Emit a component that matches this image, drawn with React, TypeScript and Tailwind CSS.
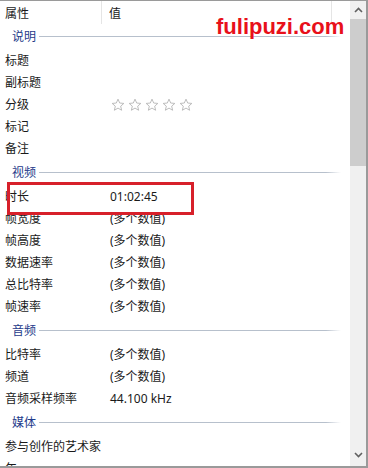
import React from 'react';

type Row = { name: string; value?: React.ReactNode };
type Group = { title: string; rows: Row[] };

const Stars = () => (
  <div className="flex items-center gap-[3px] pl-[1px]">
    {[0, 1, 2, 3, 4].map((i) => (
      <svg key={i} width="14" height="14" viewBox="0 0 24 24">
        <polygon
          points="12,2 14.9,8.6 22,9.3 16.6,14 18.2,21 12,17.3 5.8,21 7.4,14 2,9.3 9.1,8.6"
          fill="none"
          stroke="#b3b3b3"
          strokeWidth="1.5"
          strokeLinejoin="round"
        />
      </svg>
    ))}
  </div>
);

const groups: Group[] = [
  {
    title: '说明',
    rows: [
      { name: '标题' },
      { name: '副标题' },
      { name: '分级', value: <Stars /> },
      { name: '标记' },
      { name: '备注' },
    ],
  },
  {
    title: '视频',
    rows: [
      { name: '时长', value: '01:02:45' },
      { name: '帧宽度', value: '(多个数值)' },
      { name: '帧高度', value: '(多个数值)' },
      { name: '数据速率', value: '(多个数值)' },
      { name: '总比特率', value: '(多个数值)' },
      { name: '帧速率', value: '(多个数值)' },
    ],
  },
  {
    title: '音频',
    rows: [
      { name: '比特率', value: '(多个数值)' },
      { name: '频道', value: '(多个数值)' },
      { name: '音频采样频率', value: '44.100 kHz' },
    ],
  },
  {
    title: '媒体',
    rows: [{ name: '参与创作的艺术家' }, { name: '年' }],
  },
];

export default function App() {
  return (
    <div
      className="relative w-[368px] h-[468px] overflow-hidden bg-white flex border-t border-b-2 border-r-2 border-[#9a9a9a] text-[12px] text-[#1a1a1a]"
      style={{ fontFamily: '"Noto Sans", "Noto Sans CJK SC", sans-serif' }}
    >
      <div className="flex-1 overflow-hidden">
        {/* column header */}
        <div className="flex h-[23px] items-center">
          <div className="w-[102px] h-full flex items-center pl-[5px] pt-[3px] border-r border-[#e5e5e5]">属性</div>
          <div className="w-[230px] h-full flex items-center pl-[7px] pt-[3px] border-r border-[#e5e5e5]">值</div>
        </div>

        {groups.map((g, gi) => (
          <div key={g.title} className={gi === 0 ? '' : 'mt-[2px]'}>
            <div className="flex h-[24px] items-center pl-[12px] pr-[9px]">
              <span className="text-[#1e3a8a] pt-[2px]">{g.title}</span>
              <div className="flex-1 h-px ml-[3px] mt-[1px] bg-[linear-gradient(to_right,#b7c0cc_95%,transparent)]" />
            </div>
            {g.rows.map((r) => (
              <div key={r.name} className="flex h-[22px] items-center pt-[4px]">
                <div className="w-[110px] pl-[5px] whitespace-nowrap">{r.name}</div>
                <div className="flex-1 whitespace-nowrap">{r.value}</div>
              </div>
            ))}
          </div>
        ))}
      </div>

      {/* scrollbar */}
      <div className="w-[16px] h-full bg-[#f0f0f0] flex flex-col">
        <div className="h-[17px] flex items-center justify-center">
          <svg width="9" height="6" viewBox="0 0 9 6">
            <path d="M1 5 L4.5 1.5 L8 5" fill="none" stroke="#606060" strokeWidth="1.6" />
          </svg>
        </div>
        <div className="h-[147px] bg-[#cdcdcd] mt-[1px]" />
        <div className="flex-1" />
        <div className="h-[17px] flex items-center justify-center mb-[3px]">
          <svg width="9" height="6" viewBox="0 0 9 6">
            <path d="M1 1 L4.5 4.5 L8 1" fill="none" stroke="#606060" strokeWidth="1.6" />
          </svg>
        </div>
      </div>

      {/* annotation box */}
      <div className="absolute left-[7px] top-[181px] w-[187px] h-[33px] border-[3px] border-[#d7202a]" />

      {/* watermark */}
      <div
        className="absolute left-[216px] top-[15px] text-[22px] leading-[22px] font-bold text-[#e8101a]"
        style={{ fontFamily: '"Liberation Sans", Arial, sans-serif' }}
      >
        fulipuzi.com
      </div>
    </div>
  );
}
